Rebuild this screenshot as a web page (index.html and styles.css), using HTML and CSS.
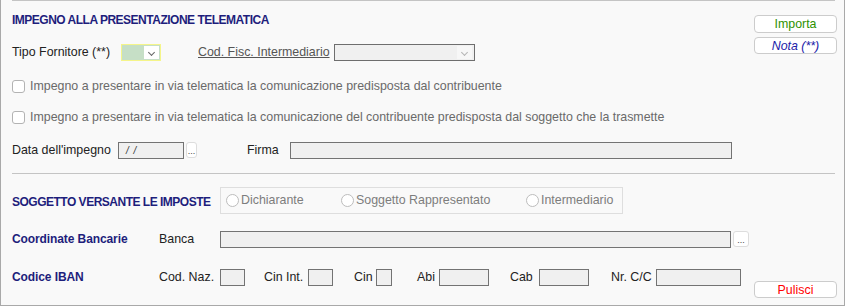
FILE: index.html
```html
<!DOCTYPE html>
<html>
<head>
    <title>Impegno alla presentazione telematica</title>
    <link rel="stylesheet" href="styles.css">
</head>
<body>
    <div class="panel">
        <div class="rule"></div>

        <div class="top-section">
            <div class="main-col">
                <div class="title-row">
                    <span class="section-title">IMPEGNO ALLA PRESENTAZIONE TELEMATICA</span>
                </div>

                <div class="row row-tipo">
                    <span class="lbl w-tipo">Tipo Fornitore (**)</span>
                    <span class="select select-tipo"><span class="arrow-box"><span class="chevron"></span></span></span>
                    <span class="lbl link-lbl w-cod">Cod. Fisc. Intermediario</span>
                    <span class="select select-cod"><span class="arrow-box"><span class="chevron"></span></span></span>
                </div>

                <div class="row row-check1">
                    <span class="checkbox"></span>
                    <span class="check-text">Impegno a presentare in via telematica la comunicazione predisposta dal contribuente</span>
                </div>

                <div class="row row-check2">
                    <span class="checkbox"></span>
                    <span class="check-text">Impegno a presentare in via telematica la comunicazione del contribuente predisposta dal soggetto che la trasmette</span>
                </div>

                <div class="row row-data">
                    <span class="lbl w-data">Data dell'impegno</span>
                    <span class="input input-data"><span class="date-mask">/ /</span></span>
                    <span class="dots-btn">...</span>
                    <span class="lbl w-firma">Firma</span>
                    <span class="input input-firma"></span>
                </div>
            </div>

            <div class="side-col">
                <button class="side-btn btn-importa">Importa</button>
                <button class="side-btn btn-nota">Nota (**)</button>
            </div>
        </div>

        <div class="rule"></div>

        <div class="row row-soggetto">
            <span class="section-title w-sogg">SOGGETTO VERSANTE LE IMPOSTE</span>
            <div class="radio-group">
                <span class="radio-item w-r1"><span class="radio"></span>Dichiarante</span>
                <span class="radio-item w-r2"><span class="radio"></span>Soggetto Rappresentato</span>
                <span class="radio-item"><span class="radio"></span>Intermediario</span>
            </div>
        </div>

        <div class="row row-banca">
            <span class="section-title sub-title w-sub">Coordinate Bancarie</span>
            <span class="lbl w-banca">Banca</span>
            <span class="input input-banca"></span>
            <span class="dots-btn dots-wide">...</span>
        </div>

        <div class="row row-iban">
            <span class="section-title sub-title w-sub">Codice IBAN</span>
            <span class="lbl w-banca">Cod. Naz.</span>
            <span class="input in-naz"></span>
            <span class="lbl gap-cinint w-cinint">Cin Int.</span>
            <span class="input in-cinint"></span>
            <span class="lbl gap-cin w-cin">Cin</span>
            <span class="input in-cin"></span>
            <span class="lbl gap-abi w-abi">Abi</span>
            <span class="input in-abi"></span>
            <span class="lbl gap-cab w-cab">Cab</span>
            <span class="input in-cab"></span>
            <span class="lbl gap-cc w-cc">Nr. C/C</span>
            <span class="input in-cc"></span>
            <button class="side-btn btn-pulisci">Pulisci</button>
        </div>
    </div>
</body>
</html>
```

FILE: styles.css
```css
body {
    margin: 0;
    background-color: #ffffff;
    font-family: "Liberation Sans", Arial, sans-serif;
    font-size: 12.4px;
    color: #222222;
}

.panel {
    box-sizing: border-box;
    width: 845px;
    height: 306px;
    background-color: #f9f9f9;
    border-left: 1px solid #a9a9a9;
    border-right: 1px solid #a9a9a9;
    border-bottom: 1px solid #a9a9a9;
}

.rule {
    height: 1px;
    margin: 0 9px 0 11px;
    background-color: #c4c4c4;
}

.top-section {
    display: flex;
    height: 172px;
}

.main-col {
    flex: 1;
    padding-left: 11px;
}

.side-col {
    display: flex;
    flex-direction: column;
    width: 83px;
    margin-top: 14px;
    margin-right: 7px;
    gap: 4px;
}

.section-title {
    font-size: 12px;
    font-weight: bold;
    color: #1e1e7c;
    letter-spacing: -0.5px;
}

.sub-title {
    letter-spacing: -0.1px;
}

.title-row {
    display: flex;
    align-items: center;
    height: 38px;
}

.row {
    display: flex;
    align-items: center;
}

.row-tipo { height: 26px; }
.row-check1 { height: 42px; }
.row-check2 { height: 20px; }
.row-data { height: 46px; }

.lbl {
    flex: none;
    white-space: nowrap;
}

.link-lbl {
    color: #555555;
    text-decoration: underline;
}

.w-tipo { width: 109px; }
.w-cod { width: 136px; margin-left: 37px; }
.w-data { width: 106px; }
.w-firma { width: 43px; margin-left: 50px; }
.w-sogg { width: 208px; flex: none; margin-top: 4px; }
.w-sub { width: 147px; flex: none; }
.w-banca { width: 61px; }
.w-cinint { width: 44px; }
.w-cin { width: 22px; }
.w-abi { width: 22px; }
.w-cab { width: 29px; }
.w-cc { width: 45px; }

.gap-cinint { margin-left: 19px; }
.gap-cin { margin-left: 21px; }
.gap-abi { margin-left: 25px; }
.gap-cab { margin-left: 21px; }
.gap-cc { margin-left: 22px; }

.select {
    box-sizing: border-box;
    display: flex;
    justify-content: flex-end;
    align-items: center;
    height: 17px;
    flex: none;
}

.select-tipo {
    width: 40px;
    background-color: #c6dfc6;
    border: 1px solid #f5f58a;
    padding-right: 1px;
}

.select-cod {
    width: 141px;
    background-color: #f0f0f0;
    border: 1px solid #6e6e6e;
    padding-right: 2px;
}

.arrow-box {
    display: flex;
    justify-content: center;
    width: 15px;
    height: 13px;
    background-color: #ffffff;
}

.select-cod .arrow-box {
    background-color: #f7f7f7;
}

.chevron {
    width: 4px;
    height: 4px;
    margin-top: 4px;
    border-right: 1px solid #666666;
    border-bottom: 1px solid #666666;
    transform: rotate(45deg);
}

.select-cod .chevron {
    border-color: #b5b5b5;
}

.checkbox {
    box-sizing: border-box;
    width: 13px;
    height: 13px;
    margin-right: 5px;
    border: 1px solid #b3b3b3;
    border-radius: 3px;
    background-color: #ffffff;
    flex: none;
}

.check-text {
    color: #6a6a6a;
    white-space: nowrap;
}

.input {
    box-sizing: border-box;
    display: flex;
    align-items: center;
    height: 17px;
    background-color: #f0f0f0;
    border: 1px solid #737373;
    flex: none;
}

.input-data { width: 66px; padding-left: 7px; }
.input-firma { width: 442px; }
.input-banca { width: 511px; }
.in-naz { width: 25px; }
.in-cinint { width: 25px; }
.in-cin { width: 16px; }
.in-abi { width: 50px; }
.in-cab { width: 50px; }
.in-cc { width: 85px; }

.date-mask {
    font-size: 10px;
    font-style: italic;
    color: #333333;
    white-space: pre;
    word-spacing: 2px;
}

.dots-btn {
    box-sizing: border-box;
    display: flex;
    justify-content: center;
    align-items: flex-end;
    width: 11px;
    height: 16px;
    margin-left: 2px;
    padding-bottom: 3px;
    border: 1px solid #dddddd;
    border-radius: 3px;
    background-color: #ffffff;
    font-size: 9px;
    line-height: 6px;
    color: #444444;
    flex: none;
}

.dots-wide {
    width: 16px;
}

.row-soggetto {
    height: 52px;
    padding-left: 11px;
}

.radio-group {
    box-sizing: border-box;
    display: flex;
    align-items: center;
    width: 403px;
    height: 27px;
    padding-left: 5px;
    border: 1px solid #dedede;
}

.radio-item {
    display: flex;
    align-items: center;
    color: #7d7d7d;
    white-space: nowrap;
}

.w-r1 { width: 115px; }
.w-r2 { width: 185px; }

.radio {
    box-sizing: border-box;
    width: 13px;
    height: 13px;
    margin-right: 2px;
    border: 1px solid #bdbdbd;
    border-radius: 50%;
    background-color: #ffffff;
}

.row-banca {
    height: 26px;
    padding-left: 11px;
}

.row-iban {
    height: 50px;
    padding-left: 11px;
}

.side-btn {
    box-sizing: border-box;
    width: 83px;
    height: 17px;
    padding: 0;
    border: 1px solid #cccccc;
    border-radius: 4px;
    background-color: #ffffff;
    font-family: "Liberation Sans", Arial, sans-serif;
    font-size: 12.4px;
    cursor: pointer;
}

.btn-importa {
    height: 18px;
    color: #2e9200;
}

.btn-nota {
    color: #1c1ca8;
    font-style: italic;
}

.btn-pulisci {
    margin-left: auto;
    margin-right: 7px;
    align-self: flex-end;
    margin-bottom: 4px;
    color: #ff0000;
}
```
